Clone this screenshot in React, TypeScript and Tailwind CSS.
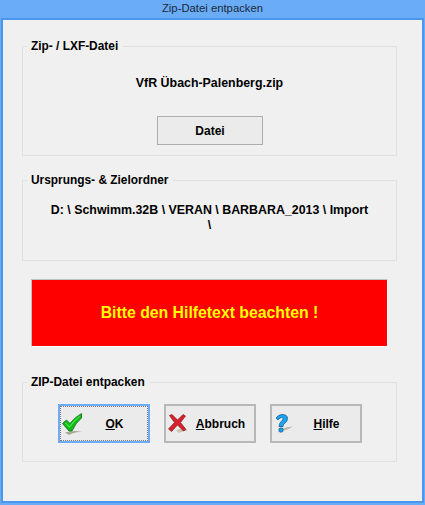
const font = "font-['Liberation_Sans',Arial,sans-serif]";

function Group({ label, className, children }: { label: string; className: string; children: React.ReactNode }) {
  return (
    <section className={`relative border border-[#dfe1df] ${className}`}>
      <h2 className="absolute left-[4px] top-[-9px] bg-[#f0f0f0] pr-[5px] pl-[4px] text-[11.900px] leading-[16px] font-bold text-black">{label}</h2>
      {children}
    </section>
  );
}

function Check() {
  return (
    <svg width="21" height="22" viewBox="0 0 21 22">
      <path d="M3 19.500 Q10 17 20 18.500 Q12 19 7 22 Z" fill="#a9a99a" />
      <path d="M0.500 10.500 L4.500 7 L8 10.500 Q12 5 19.500 0.500 L19.500 5 Q13.500 10 10 18 L7 18 Z" fill="#12b81c" stroke="#0a6a14" strokeWidth="0.8" />
      <path d="M3.500 10 L7.500 14 Q12 7.500 18 3" fill="none" stroke="#3fe83f" strokeWidth="1.200" />
    </svg>
  );
}

function Cross() {
  return (
    <svg width="20" height="19" viewBox="0 0 20 19">
      <path d="M8 16 Q14 14 20 16.500 Q14 17 11 19 Z" fill="#c9c4ae" />
      <path d="M1.500 1.500 L4 0.500 L9.500 6 L15 0.500 L17.500 2 L12.500 8.500 L18 15.500 L15.500 17 L9.500 11 L3.500 17.500 L0.500 15 L6.500 8.500 Z" fill="#d4212c" stroke="#8f1a22" strokeWidth="0.7" />
    </svg>
  );
}

function Question() {
  return (
    <svg width="18" height="19" viewBox="0 0 18 19">
      <path d="M7 15 Q12 12.500 18 12.500 Q14 15 9 16.500 Z" fill="#b9b6a4" />
      <path d="M1 4 Q3.500 0.500 7 0.500 Q12.500 0.500 12.500 4.500 Q12.500 7.500 10 9 Q8 10.500 8 12.500 L4 12.500 Q4 9 6.500 7.200 Q8 6 8 4.500 Q8 3.500 6.500 3.500 Q5 3.500 3 6 Z" fill="#1aa5ee" stroke="#0b4f8e" strokeWidth="0.7" />
      <circle cx="6" cy="16" r="2.200" fill="#1aa5ee" stroke="#0b4f8e" strokeWidth="0.7" />
    </svg>
  );
}

function ActionButton({ icon, hot, rest, focused }: { icon: React.ReactNode; hot: string; rest: string; focused?: boolean }) {
  return (
    <button
      className={`flex h-[39px] w-[92px] items-center bg-[#ebebeb] text-[12px] font-bold text-black ${
        focused
          ? "border-2 border-[#6bacf8] outline-1 outline-dotted -outline-offset-3 outline-[#8a7a70]"
          : "border-2 border-[#b8b8b8]"
      }`}
    >
      <span className="ml-[1px] flex w-[22px] justify-center">{icon}</span>
      <span className="w-[63px] text-center">
        <span className="underline">{hot}</span>
        {rest}
      </span>
    </button>
  );
}

export default function App() {
  return (
    <div className={`flex h-[505px] w-[425px] flex-col overflow-hidden bg-[#6bacf8] ${font}`}>
      <header className="h-[18px] text-center text-[11.300px] leading-[17px] text-[#1a2a3a]">Zip-Datei entpacken</header>
      <main className="mx-[1px] mb-[2px] flex flex-1 flex-col border-2 border-[#4a97ee] bg-[#f0f0f0] pt-[26px]">
        <Group label="Zip- / LXF-Datei" className="ml-[19px] flex h-[110px] w-[375px] flex-col items-center">
          <p className="mt-[28px] text-[12.400px] leading-[16px] font-bold text-black">VfR Übach-Palenberg.zip</p>
          <button className="mt-[25px] ml-[1px] h-[29px] w-[106px] border border-[#adadad] bg-[#ebebeb] text-[12px] font-bold text-black">Datei</button>
        </Group>
        <Group label="Ursprungs- & Zielordner" className="mt-[24px] ml-[19px] flex h-[81px] w-[375px] flex-col items-center">
          <p className="mt-[22px] text-center text-[12.400px] leading-[15px] font-bold text-black">
            D: \ Schwimm.32B \ VERAN \ BARBARA_2013 \ Import
            <br />\
          </p>
        </Group>
        <div className="mt-[18px] ml-[28px] flex h-[68px] w-[357px] items-center justify-center border border-t-[#b8c4c4] border-r-white border-b-white border-l-[#b8c4c4] bg-[#ff0000] text-[15.800px] font-bold text-[#ffff00]">
          Bitte den Hilfetext beachten !
        </div>
        <Group label="ZIP-Datei entpacken" className="mt-[35px] ml-[19px] h-[80px] w-[375px]">
          <div className="mt-[21px] ml-[35px] flex gap-[14px]">
            <ActionButton focused icon={<Check />} hot="O" rest="K" />
            <ActionButton icon={<Cross />} hot="A" rest="bbruch" />
            <ActionButton icon={<Question />} hot="H" rest="ilfe" />
          </div>
        </Group>
      </main>
    </div>
  );
}
